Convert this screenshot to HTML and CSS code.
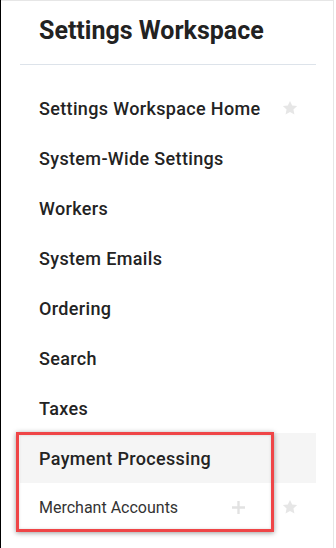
FILE: index.html
```html
<!DOCTYPE html>
<html>
<head>
<meta charset="utf-8">
<link rel="stylesheet" href="styles.css">
</head>
<body>
<div class="frame">
  <aside class="panel">
    <h1 class="title">Settings Workspace</h1>
    <div class="divider"></div>
    <nav class="menu">
      <div class="item">
        <span class="label">Settings Workspace Home</span>
        <svg class="star" viewBox="0 0 24 24"><path d="M12 2.5l2.9 6.1 6.6.8-4.9 4.6 1.3 6.6L12 17.3l-5.9 3.3 1.3-6.6-4.9-4.6 6.6-.8z"/></svg>
      </div>
      <div class="item"><span class="label">System-Wide Settings</span></div>
      <div class="item"><span class="label">Workers</span></div>
      <div class="item"><span class="label">System Emails</span></div>
      <div class="item"><span class="label">Ordering</span></div>
      <div class="item"><span class="label">Search</span></div>
      <div class="item"><span class="label">Taxes</span></div>
      <div class="item active"><span class="label">Payment Processing</span></div>
      <div class="item sub">
        <span class="label">Merchant Accounts</span>
        <svg class="plus" viewBox="0 0 12 12"><path d="M6 0v12M0 6h12"/></svg>
        <svg class="star" viewBox="0 0 24 24"><path d="M12 2.5l2.9 6.1 6.6.8-4.9 4.6 1.3 6.6L12 17.3l-5.9 3.3 1.3-6.6-4.9-4.6 6.6-.8z"/></svg>
      </div>
    </nav>
  </aside>
  <div class="highlight-box"></div>
</div>
</body>
</html>
```
FILE: styles.css
```css
* { box-sizing: border-box; }
html, body {
  margin: 0;
  padding: 0;
  background: #fff;
}
body {
  width: 336px;
  height: 548px;
  overflow: hidden;
  font-family: Roboto, "Noto Sans", Arial, sans-serif;
}
.frame {
  position: relative;
  height: 548px;
  border-left: 1px solid #000;
}
.panel {
  width: 333px;
  height: 548px;
  border-top: 1px solid #e6e6e6;
  border-right: 1px solid #e6e6e6;
  padding-left: 19px;
  padding-right: 17px;
}
.title {
  margin: 0;
  padding: 15px 0 0 19px;
  height: 63px;
  font-size: 25px;
  font-weight: 700;
  color: #222;
  line-height: 30px;
}
.divider {
  height: 1px;
  background: #dde3ea;
}
.menu {
  padding-top: 18px;
  display: flex;
  flex-direction: column;
}
.item {
  height: 50px;
  display: flex;
  align-items: center;
  padding-left: 19px;
  padding-right: 17px;
  font-size: 18px;
  font-weight: 500;
  letter-spacing: 0.35px;
  color: #232323;
}
.item .label { flex: 1; }
.item.active { background: #f5f5f5; }
.item.sub {
  height: 48px;
  font-size: 16px;
  font-weight: 400;
  letter-spacing: 0;
  color: #333;
}
.star {
  width: 18px;
  height: 18px;
  fill: #e6e6e6;
  flex: none;
}
.plus {
  width: 13px;
  height: 13px;
  stroke: #e2e2e2;
  stroke-width: 2.2;
  flex: none;
  margin-right: 36px;
}
.highlight-box {
  position: absolute;
  left: 15px;
  top: 432px;
  width: 258px;
  height: 100px;
  border: 3px solid #ef4547;
  box-shadow: 0 1px 5px rgba(0,0,0,0.4), inset 0 0 3px rgba(0,0,0,0.15);
  pointer-events: none;
}
```
